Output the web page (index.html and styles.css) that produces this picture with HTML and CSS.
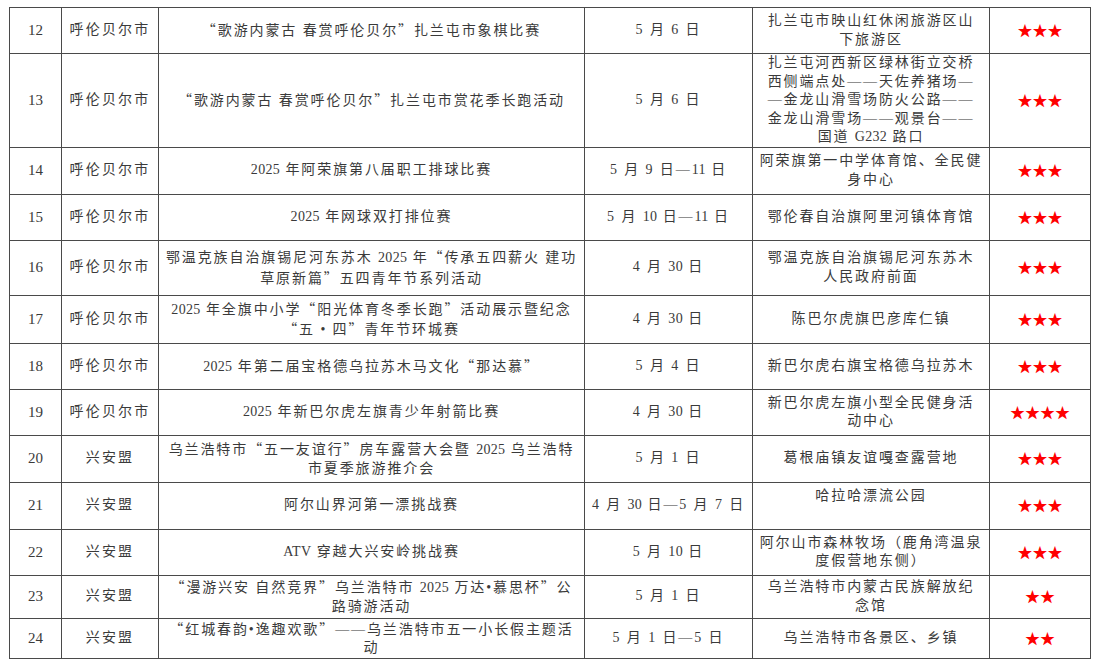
FILE: index.html
```html
<!DOCTYPE html>
<html lang="zh-CN">
<head>
<meta charset="utf-8">
<title>活动列表</title>
<link rel="stylesheet" href="styles.css">
</head>
<body>
<div class="page">
<table class="events">
<colgroup>
<col class="c-no"><col class="c-city"><col class="c-event"><col class="c-date"><col class="c-place"><col class="c-star">
</colgroup>
<tbody>
<tr class="h46">
<td class="no">12</td><td class="city">呼伦贝尔市</td>
<td class="event"><span class="q">“</span>歌游内蒙古 春赏呼伦贝尔<span class="q">”</span>扎兰屯市象棋比赛</td>
<td class="date">5 月 6 日</td>
<td class="place">扎兰屯市映山红休闲旅游区山<br>下旅游区</td>
<td class="star">★★★</td>
</tr>
<tr class="h93">
<td class="no">13</td><td class="city">呼伦贝尔市</td>
<td class="event"><span class="q">“</span>歌游内蒙古 春赏呼伦贝尔<span class="q">”</span>扎兰屯市赏花季长跑活动</td>
<td class="date">5 月 6 日</td>
<td class="place">扎兰屯河西新区绿林街立交桥<br>西侧端点处——天佐养猪场—<br>—金龙山滑雪场防火公路——<br>金龙山滑雪场——观景台——<br>国道 <span class="n">G232</span> 路口</td>
<td class="star">★★★</td>
</tr>
<tr class="h47">
<td class="no">14</td><td class="city">呼伦贝尔市</td>
<td class="event"><span class="n">2025</span> 年阿荣旗第八届职工排球比赛</td>
<td class="date">5 月 9 日—<span class="n">11</span> 日</td>
<td class="place">阿荣旗第一中学体育馆、全民健<br>身中心</td>
<td class="star">★★★</td>
</tr>
<tr class="h46">
<td class="no">15</td><td class="city">呼伦贝尔市</td>
<td class="event"><span class="n">2025</span> 年网球双打排位赛</td>
<td class="date">5 月 <span class="n">10</span> 日—<span class="n">11</span> 日</td>
<td class="place">鄂伦春自治旗阿里河镇体育馆</td>
<td class="star">★★★</td>
</tr>
<tr class="h55">
<td class="no">16</td><td class="city">呼伦贝尔市</td>
<td class="event">鄂温克族自治旗锡尼河东苏木 <span class="n">2025</span> 年<span class="q">“</span>传承五四薪火 建功<br>草原新篇<span class="q">”</span>五四青年节系列活动</td>
<td class="date">4 月 <span class="n">30</span> 日</td>
<td class="place">鄂温克族自治旗锡尼河东苏木<br>人民政府前面</td>
<td class="star">★★★</td>
</tr>
<tr class="h48">
<td class="no">17</td><td class="city">呼伦贝尔市</td>
<td class="event"><span class="n">2025</span> 年全旗中小学<span class="q">“</span>阳光体育冬季长跑<span class="q">”</span>活动展示暨纪念<br><span class="q">“</span>五 • 四<span class="q">”</span>青年节环城赛</td>
<td class="date">4 月 <span class="n">30</span> 日</td>
<td class="place">陈巴尔虎旗巴彦库仁镇</td>
<td class="star">★★★</td>
</tr>
<tr class="h46">
<td class="no">18</td><td class="city">呼伦贝尔市</td>
<td class="event"><span class="n">2025</span> 年第二届宝格德乌拉苏木马文化<span class="q">“</span>那达慕<span class="q">”</span></td>
<td class="date">5 月 4 日</td>
<td class="place">新巴尔虎右旗宝格德乌拉苏木</td>
<td class="star">★★★</td>
</tr>
<tr class="h46">
<td class="no">19</td><td class="city">呼伦贝尔市</td>
<td class="event"><span class="n">2025</span> 年新巴尔虎左旗青少年射箭比赛</td>
<td class="date">4 月 <span class="n">30</span> 日</td>
<td class="place">新巴尔虎左旗小型全民健身活<br>动中心</td>
<td class="star">★★★★</td>
</tr>
<tr class="h47">
<td class="no">20</td><td class="city">兴安盟</td>
<td class="event">乌兰浩特市<span class="q">“</span>五一友谊行<span class="q">”</span>房车露营大会暨 <span class="n">2025</span> 乌兰浩特<br>市夏季旅游推介会</td>
<td class="date">5 月 1 日</td>
<td class="place">葛根庙镇友谊嘎查露营地</td>
<td class="star">★★★</td>
</tr>
<tr class="h47">
<td class="no">21</td><td class="city">兴安盟</td>
<td class="event">阿尔山界河第一漂挑战赛</td>
<td class="date">4 月 <span class="n">30</span> 日—5 月 7 日</td>
<td class="place">哈拉哈漂流公园<br>&nbsp;</td>
<td class="star">★★★</td>
</tr>
<tr class="h46">
<td class="no">22</td><td class="city">兴安盟</td>
<td class="event"><span class="n">ATV</span> 穿越大兴安岭挑战赛</td>
<td class="date">5 月 <span class="n">10</span> 日</td>
<td class="place">阿尔山市森林牧场（鹿角湾温泉<br>度假营地东侧）</td>
<td class="star">★★★</td>
</tr>
<tr class="h43">
<td class="no">23</td><td class="city">兴安盟</td>
<td class="event"><span class="q">“</span>漫游兴安 自然竞界<span class="q">”</span>乌兰浩特市 <span class="n">2025</span> 万达•慕思杯<span class="q">”</span>公<br>路骑游活动</td>
<td class="date">5 月 1 日</td>
<td class="place">乌兰浩特市内蒙古民族解放纪<br>念馆</td>
<td class="star">★★</td>
</tr>
<tr class="h37">
<td class="no">24</td><td class="city">兴安盟</td>
<td class="event"><span class="q">“</span>红城春韵•逸趣欢歌<span class="q">”</span>——乌兰浩特市五一小长假主题活<br>动</td>
<td class="date">5 月 1 日—5 日</td>
<td class="place">乌兰浩特市各景区、乡镇</td>
<td class="star">★★</td>
</tr>
</tbody>
</table>
</div>
</body>
</html>
```
FILE: styles.css
```css
html, body {
  margin: 0;
  padding: 0;
  background: #ffffff;
}

.page {
  padding: 7px 0 0 9px;
}

.events {
  border-collapse: collapse;
  table-layout: fixed;
  width: 1082px;
  font-family: "Liberation Serif", "Noto Sans CJK SC", serif;
  font-size: 14px;
  letter-spacing: 1.9px;
  color: #3a3a3a;
}

.c-no { width: 52px; }
.c-city { width: 97px; }
.c-event { width: 426px; }
.c-date { width: 168px; }
.c-place { width: 237px; }
.c-star { width: 101px; }

.events td {
  border: 1px solid #4a4a4a;
  padding: 0 4px;
  text-align: center;
  vertical-align: middle;
  line-height: 18.5px;
  white-space: nowrap;
  overflow: visible;
}

.events td.no {
  font-size: 15px;
  letter-spacing: 0;
}

.events td.city {
  letter-spacing: 2.2px;
}

.events td.star {
  font-family: "Noto Sans CJK SC", sans-serif;
  font-size: 15px;
  letter-spacing: 0;
  color: #ff0000;
}

.q {
  font-family: "Noto Sans CJK SC", sans-serif;
}

.n {
  font-size: 14px;
  letter-spacing: 0.3px;
}

.h46 { height: 46px; }
.h47 { height: 47px; }
.h48 { height: 48px; }
.h55 { height: 55px; }
.h93 { height: 93px; }
.h43 { height: 43px; }
.h37 { height: 37px; }
```
